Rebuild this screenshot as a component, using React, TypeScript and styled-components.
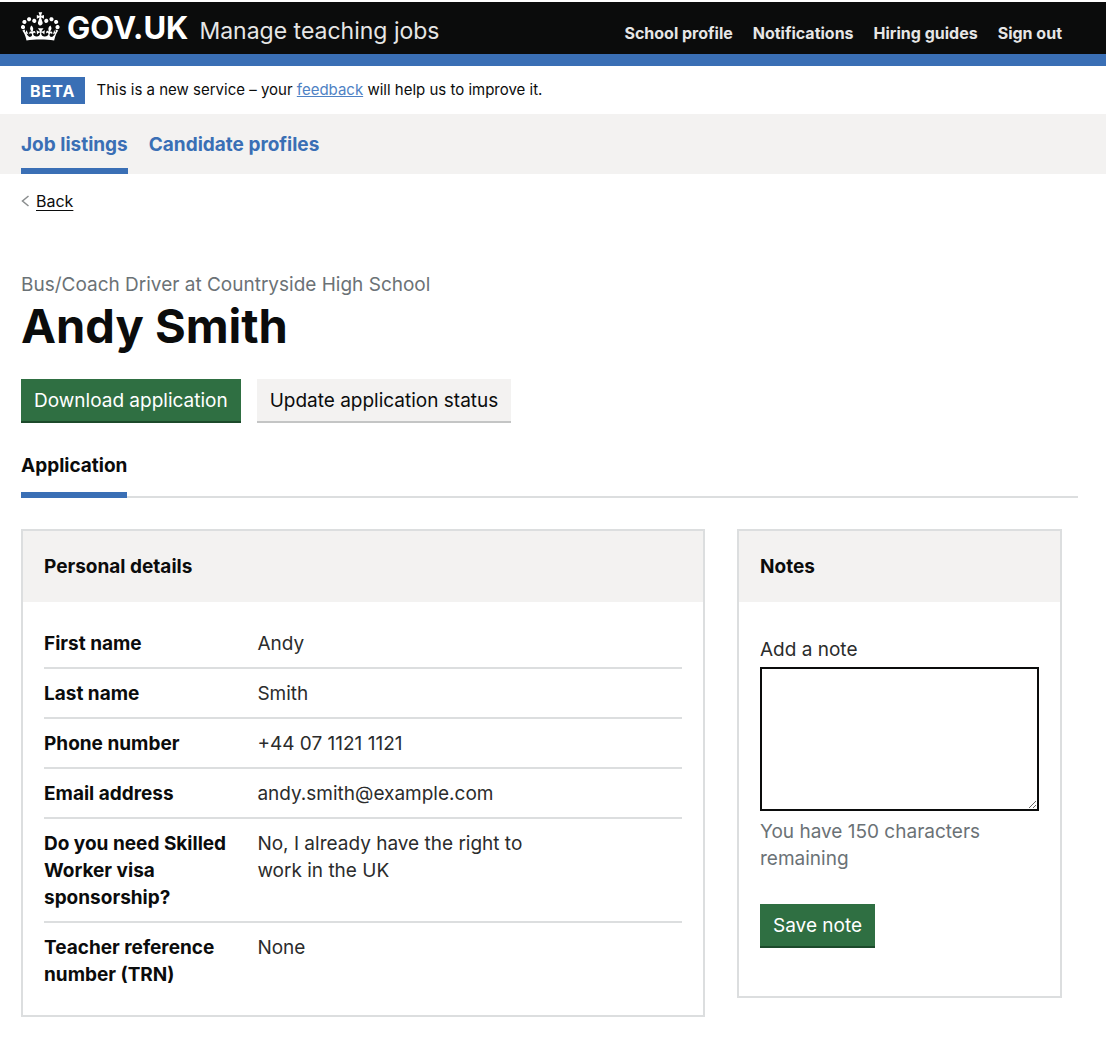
import React, { useState } from 'react';
import styled, { createGlobalStyle } from 'styled-components';

const ink = '#0b0c0c';
const blue = '#3a6fb5';
const grey = '#f3f2f1';
const line = '#dcdedf';
const muted = '#6b7276';

const GlobalStyle = createGlobalStyle`
  *, *::before, *::after { box-sizing: border-box; }
  body {
    margin: 2px 2px 0 0;
    background: #fff;
    color: ${ink};
    font-family: Inter, "Liberation Sans", sans-serif;
    font-size: 19px;
    line-height: 27px;
  }
  h1, h2, p, dl, dd, ul { margin: 0; padding: 0; }
`;

const Header = styled.header`
  display: flex;
  align-items: center;
  justify-content: space-between;
  height: 64px;
  padding: 0 44px 0 21px;
  background: ${ink};
  border-bottom: 12px solid ${blue};
`;

const Brand = styled.div`
  display: flex;
  align-items: center;
  gap: 11px;
`;

const LogoLink = styled.a`
  display: flex;
  align-items: center;
  gap: 7px;
  color: #fff;
  font-size: 31px;
  line-height: 36px;
  font-weight: 700;
  text-decoration: none;
`;

const ServiceLink = styled.a`
  padding-top: 6px;
  color: #e6e6e6;
  font-size: 23px;
  text-decoration: none;
`;

const HeaderNav = styled.nav`
  display: flex;
  gap: 20px;
  padding-top: 10px;
`;

const HeaderLink = styled.a`
  color: #e6e6e6;
  font-size: 16px;
  line-height: 20px;
  font-weight: 700;
  text-decoration: none;
`;

const PhaseBanner = styled.div`
  display: flex;
  align-items: center;
  gap: 12px;
  height: 48px;
  padding-left: 21px;
  font-size: 15px;
  line-height: 20px;
`;

const PhaseTag = styled.strong`
  padding: 4px 9px 3px;
  background: ${blue};
  color: #fff;
  font-size: 16px;
  letter-spacing: 1px;
`;

const InlineLink = styled.a`
  color: #4f82c4;
`;

const PrimaryNav = styled.nav`
  display: flex;
  gap: 21px;
  height: 60px;
  padding-left: 21px;
  background: ${grey};
`;

const PrimaryLink = styled.a<{ $current?: boolean }>`
  padding-top: 17px;
  border-bottom: 6px solid ${(p) => (p.$current ? blue : 'transparent')};
  color: ${blue};
  font-weight: 700;
  text-decoration: none;
`;

const Main = styled.main`
  padding: 17px 28px 0 21px;
`;

const BackLink = styled.a`
  display: flex;
  width: max-content;
  align-items: center;
  gap: 6px;
  color: ${ink};
  font-size: 16px;
  line-height: 20px;
  text-decoration: none;
  span { text-decoration: underline; text-underline-offset: 3px; }
`;

const Caption = styled.p`
  margin-top: 60px;
  color: ${muted};
`;

const Title = styled.h1`
  font-size: 47px;
  line-height: 56px;
  font-weight: 700;
`;

const Actions = styled.div`
  display: flex;
  gap: 16px;
  margin-top: 25px;
`;

const Button = styled.button<{ $secondary?: boolean }>`
  height: 44px;
  padding: 0 13px;
  border: 0;
  border-bottom: 2px solid ${(p) => (p.$secondary ? '#c4c5c5' : '#1c4a2b')};
  background: ${(p) => (p.$secondary ? grey : '#2f6f42')};
  color: ${(p) => (p.$secondary ? ink : '#fff')};
  font: inherit;
`;

const Tabs = styled.nav`
  display: flex;
  margin-top: 29px;
  border-bottom: 2px solid ${line};
`;

const Tab = styled.a`
  margin-bottom: -2px;
  padding-bottom: 13px;
  border-bottom: 6px solid ${blue};
  color: ${ink};
  font-weight: 700;
  text-decoration: none;
`;

const Columns = styled.div`
  display: grid;
  grid-template-columns: minmax(0, 684fr) minmax(0, 325fr);
  align-items: start;
  gap: 32px;
  margin-top: 31px;
  padding-right: 16px;
`;

const Card = styled.section`
  border: 2px solid ${line};
`;

const CardTitle = styled.h2`
  padding: 22px 21px;
  background: ${grey};
  font-size: 19px;
  line-height: 27px;
  font-weight: 700;
`;

const SummaryList = styled.dl`
  padding: 17px 21px;
`;

const SummaryRow = styled.div`
  display: grid;
  grid-template-columns: 30% 47%;
  column-gap: 22px;
  padding: 11px 0 10px;
  border-bottom: 2px solid ${line};
  &:last-child { border-bottom: 0; }
`;

const Key = styled.dt`
  font-weight: 700;
`;

const Value = styled.dd`
  color: #2b2c2c;
`;

const NoteForm = styled.form`
  display: flex;
  flex-direction: column;
  align-items: flex-start;
  padding: 34px 21px 48px;
`;

const NoteLabel = styled.label`
  color: #2b2c2c;
`;

const NoteBox = styled.textarea`
  width: 100%;
  height: 144px;
  margin: 4px 0 7px;
  padding: 6px;
  border: 2px solid ${ink};
  border-radius: 0;
  font: inherit;
  resize: vertical;
`;

const Hint = styled.p`
  margin-bottom: 32px;
  color: ${muted};
`;

const Crown = () => (
  <svg width="39" height="35" viewBox="0 3 36 32" fill="currentColor" aria-hidden="true">
    <path d="M6.7 12.2c1 .4 2.1-.1 2.5-1s-.1-2.1-1-2.5c-1-.4-2.1.1-2.5 1-.4 1 0 2.1 1 2.5m-4.3 2.5c1 .4 2.1-.1 2.5-1s-.1-2.1-1-2.5c-1-.4-2.1.1-2.5 1-.5 1 0 2.1 1 2.5m-1.3 4.8c1 .4 2.1-.1 2.5-1 .4-1-.1-2.1-1-2.5-1-.4-2.1.1-2.5 1-.4 1 0 2.1 1 2.5m10.4-5.8c1 .4 2.1-.1 2.5-1s-.1-2.1-1-2.5c-1-.4-2.1.1-2.5 1s0 2.1 1 2.5m17.4-1.5c-1 .4-2.1-.1-2.5-1s.1-2.1 1-2.5c1-.4 2.1.1 2.5 1 .5 1 0 2.1-1 2.5m4.3 2.5c-1 .4-2.1-.1-2.5-1s.1-2.1 1-2.5c1-.4 2.1.1 2.5 1 .5 1 0 2.1-1 2.5m1.3 4.8c-1 .4-2.1-.1-2.5-1-.4-1 .1-2.1 1-2.5 1-.4 2.1.1 2.5 1 .4 1 0 2.1-1 2.5m-10.4-5.8c-1 .4-2.1-.1-2.5-1s.1-2.1 1-2.5c1-.4 2.1.1 2.5 1s0 2.1-1 2.5m-5.3-4.9 2.4 1.3V6.5l-2.4.8c-.1-.1-.1-.2-.2-.2s1-3 1-3h-3.4l1 3c-.1.1-.2.1-.2.2-.1.1-2.4-.7-2.4-.7v3.5L17 8.8c-.1.1 0 .2.1.3l-1.4 4.2c-.1.2-.1.4-.1.7 0 1.1.8 2.1 1.9 2.2h.6C19.2 16 20 15.1 20 14c0-.2 0-.4-.1-.7l-1.4-4.2c.2-.1.3-.2.3-.3m-1 20.3c4.6 0 8.9.3 12.8.9 1.1-4.6 2.4-7.2 3.8-9.1l-2.6-.9c.3 1.3.3 1.9 0 2.8-.4-.4-.8-1.2-1.1-2.4l-1.2 4.2c.8-.5 1.4-.9 2-.9-1.2 2.6-2.7 3.2-3.6 3-1.2-.2-1.7-1.3-1.5-2.2.3-1.3 1.6-1.6 2.2-.1 1.2-2.4-.8-3.1-2.1-2.4 1.9-1.9 2.2-3.6.6-5.7-2.2 1.7-2.2 3.3-1.2 5.6-1.3-1.5-3.3-.7-2.5 1.7.9-1.4 2.1-.5 1.9.8-.2 1.2-1.7 2.1-3.7 1.9-2.8-.2-2.9-2.1-2.9-3.6.7-.1 1.9.5 2.9 1.9l.4-4.3c-1.1 1.1-2.1 1.4-3.2 1.4.4-1.2 2.1-3 2.1-3h-5.4s1.7 1.9 2.1 3c-1.1 0-2.1-.2-3.2-1.4l.4 4.3c1-1.4 2.2-2 2.9-1.9-.1 1.5-.2 3.4-2.9 3.6-1.9.2-3.4-.7-3.5-1.9-.2-1.3 1-2.2 1.9-.8.7-2.3-1.2-3.1-2.5-1.7.9-2.2.9-3.9-1.2-5.6-1.7 2.1-1.4 3.8.6 5.7-1.3-.7-3.2 0-2.1 2.4.6-1.5 1.8-1.2 2.2.1.2.9-.4 1.9-1.5 2.2-1 .2-2.5-.4-3.7-3 .7 0 1.3.4 2 .9L5 20.4c-.3 1.2-.7 1.9-1.2 2.4-.3-.8-.2-1.5 0-2.8l-2.6.9C2.7 22.8 4 25.4 5.1 30c3.8-.5 8.2-.9 12.7-.9" />
  </svg>
);

const Chevron = () => (
  <svg width="9" height="12" viewBox="0 0 9 12" fill="none" stroke="#8a8d8e" strokeWidth="1.5" aria-hidden="true">
    <path d="M7.5 1 1.5 6l6 5" />
  </svg>
);

const NOTE_LIMIT = 150;

const details: [string, string][] = [
  ['First name', 'Andy'],
  ['Last name', 'Smith'],
  ['Phone number', '+44 07 1121 1121'],
  ['Email address', 'andy.smith@example.com'],
  ['Do you need Skilled Worker visa sponsorship?', 'No, I already have the right to work in the UK'],
  ['Teacher reference number (TRN)', 'None'],
];

export default function App() {
  const [note, setNote] = useState('');
  return (
    <>
      <GlobalStyle />
      <Header>
        <Brand>
          <LogoLink href="#home"><Crown />GOV.UK</LogoLink>
          <ServiceLink href="#service">Manage teaching jobs</ServiceLink>
        </Brand>
        <HeaderNav aria-label="Account">
          {['School profile', 'Notifications', 'Hiring guides', 'Sign out'].map((label) => (
            <HeaderLink key={label} href="#account">{label}</HeaderLink>
          ))}
        </HeaderNav>
      </Header>
      <PhaseBanner>
        <PhaseTag>BETA</PhaseTag>
        <p>This is a new service – your <InlineLink href="#feedback">feedback</InlineLink> will help us to improve it.</p>
      </PhaseBanner>
      <PrimaryNav aria-label="Primary">
        <PrimaryLink href="#jobs" $current aria-current="page">Job listings</PrimaryLink>
        <PrimaryLink href="#profiles">Candidate profiles</PrimaryLink>
      </PrimaryNav>
      <Main>
        <BackLink href="#back"><Chevron /><span>Back</span></BackLink>
        <Caption>Bus/Coach Driver at Countryside High School</Caption>
        <Title>Andy Smith</Title>
        <Actions>
          <Button type="button">Download application</Button>
          <Button type="button" $secondary>Update application status</Button>
        </Actions>
        <Tabs aria-label="Application sections">
          <Tab href="#application" aria-current="page">Application</Tab>
        </Tabs>
        <Columns>
          <Card>
            <CardTitle>Personal details</CardTitle>
            <SummaryList>
              {details.map(([key, value]) => (
                <SummaryRow key={key}>
                  <Key>{key}</Key>
                  <Value>{value}</Value>
                </SummaryRow>
              ))}
            </SummaryList>
          </Card>
          <Card>
            <CardTitle>Notes</CardTitle>
            <NoteForm onSubmit={(e) => e.preventDefault()}>
              <NoteLabel htmlFor="note">Add a note</NoteLabel>
              <NoteBox id="note" value={note} maxLength={NOTE_LIMIT} onChange={(e) => setNote(e.target.value)} />
              <Hint>{`You have ${NOTE_LIMIT - note.length} characters remaining`}</Hint>
              <Button type="submit">Save note</Button>
            </NoteForm>
          </Card>
        </Columns>
      </Main>
    </>
  );
}
